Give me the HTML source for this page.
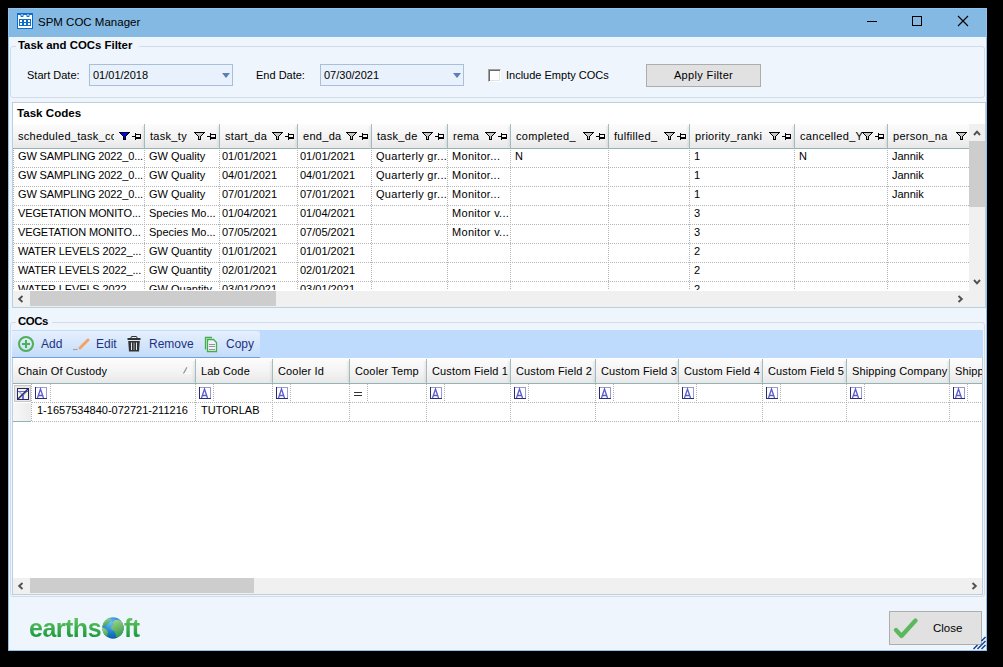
<!DOCTYPE html>
<html><head><meta charset="utf-8"><style>*{box-sizing:border-box;margin:0;padding:0}
html,body{width:1003px;height:667px;overflow:hidden;background:#000}
body{position:relative;font-family:"Liberation Sans",sans-serif;font-size:11px;color:#000}
.a{position:absolute}
.t{position:absolute;white-space:nowrap;line-height:13px}
.dv{position:absolute;width:1px;background-image:linear-gradient(#b4b4b4 50%,transparent 50%);background-size:1px 2px}
.dh{position:absolute;height:1px;background-image:linear-gradient(90deg,#b4b4b4 50%,transparent 50%);background-size:2px 1px;background-position:1px 0}
</style></head><body>
<div class="a" style="left:8px;top:8px;width:979px;height:643px;background:#eef5fd;border:1px solid #8fc1ec"></div>
<div class="a" style="left:8px;top:8px;width:979px;height:29px;background:#84b9e3;border:1px solid #8fc4f2;border-bottom:none"></div>
<svg class="a" style="left:17px;top:13px" width="16" height="16" viewBox="0 0 16 16">
<rect x="0" y="0" width="16" height="16" fill="#0b6ecb"/>
<rect x="1" y="2" width="14" height="13" fill="#fff"/>
<rect x="3.5" y="0" width="3" height="4" rx="0.8" fill="#0b6ecb"/><rect x="9.5" y="0" width="3" height="4" rx="0.8" fill="#0b6ecb"/>
<rect x="4.5" y="1" width="1" height="2" rx="0.5" fill="#fff"/><rect x="10.5" y="1" width="1" height="2" rx="0.5" fill="#fff"/>
<rect x="2" y="6" width="12" height="7" fill="#0b6ecb"/>
<rect x="3" y="7" width="2" height="2" fill="#fff"/><rect x="7" y="7" width="2" height="2" fill="#fff"/><rect x="11" y="7" width="2" height="2" fill="#fff"/>
<rect x="3" y="10" width="2" height="2" fill="#fff"/><rect x="7" y="10" width="2" height="2" fill="#fff"/><rect x="11" y="10" width="2" height="2" fill="#fff"/>
</svg>
<div class="t" style="left:38px;top:15px;font-size:11.5px;line-height:14px">SPM COC Manager</div>
<div class="a" style="left:867px;top:21px;width:10px;height:1px;background:#000"></div>
<div class="a" style="left:912px;top:16px;width:10px;height:10px;border:1px solid #000"></div>
<svg class="a" style="left:957px;top:15px" width="12" height="12" viewBox="0 0 12 12"><path d="M1 1L11 11M11 1L1 11" stroke="#000" stroke-width="1.1" fill="none"/></svg>
<div class="a" style="left:10px;top:46px;width:975px;height:52px;border:1px solid #d3dbe4;border-radius:3px"></div>
<div class="a" style="left:16px;top:40px;width:123px;height:13px;background:#eef5fd"></div>
<div class="t" style="left:18px;top:39px;font-weight:bold;font-size:11.4px">Task and COCs Filter</div>
<div class="t" style="left:27px;top:69px;">Start Date:</div>
<div class="a" style="left:89px;top:64px;width:144px;height:22px;background:#e9f1fc;border:1px solid #a8bfda"></div>
<div class="t" style="left:93px;top:69px;">01/01/2018</div>
<svg class="a" style="left:222px;top:73px" width="8" height="5" viewBox="0 0 8 5"><path d="M0 0H8L4 5Z" fill="#5a7fb5"/></svg>
<div class="t" style="left:256px;top:69px;">End Date:</div>
<div class="a" style="left:320px;top:64px;width:144px;height:22px;background:#e9f1fc;border:1px solid #a8bfda"></div>
<div class="t" style="left:324px;top:69px;">07/30/2021</div>
<svg class="a" style="left:453px;top:73px" width="8" height="5" viewBox="0 0 8 5"><path d="M0 0H8L4 5Z" fill="#5a7fb5"/></svg>
<div class="a" style="left:488px;top:69px;width:13px;height:13px;background:#fff;border:1px solid;border-color:#a0a0a0 #fff #fff #a0a0a0;box-shadow:inset 1px 1px 0 #696969,inset -1px -1px 0 #e3e3e3"></div>
<div class="t" style="left:506px;top:69px;">Include Empty COCs</div>
<div class="a" style="left:646px;top:64px;width:115px;height:23px;background:#e1e1e1;border:1px solid #adadad"></div>
<div class="t" style="left:646px;top:69px;width:115px;text-align:center;letter-spacing:0.35px">Apply Filter</div>
<div class="a" style="left:12px;top:102px;width:974px;height:206px;background:#fff;border:1px solid #bdcedd"></div>
<div class="t" style="left:17px;top:106px;font-weight:bold;font-size:11.6px">Task Codes</div>
<div class="a" style="left:13px;top:124px;width:956px;height:25px;background:linear-gradient(#fcfcfc,#f3f3f3 55%,#e8e8e8);border-bottom:1px solid #93b2b4"></div>
<div class="a" style="left:141px;top:126px;width:3px;height:21px;background:linear-gradient(90deg,rgba(0,0,0,0),rgba(0,0,0,0.07))"></div>
<div class="a" style="left:144px;top:124px;width:1px;height:24px;background:#a0bcbd"></div>
<div class="a" style="left:216px;top:126px;width:3px;height:21px;background:linear-gradient(90deg,rgba(0,0,0,0),rgba(0,0,0,0.07))"></div>
<div class="a" style="left:219px;top:124px;width:1px;height:24px;background:#a0bcbd"></div>
<div class="a" style="left:294px;top:126px;width:3px;height:21px;background:linear-gradient(90deg,rgba(0,0,0,0),rgba(0,0,0,0.07))"></div>
<div class="a" style="left:297px;top:124px;width:1px;height:24px;background:#a0bcbd"></div>
<div class="a" style="left:368px;top:126px;width:3px;height:21px;background:linear-gradient(90deg,rgba(0,0,0,0),rgba(0,0,0,0.07))"></div>
<div class="a" style="left:371px;top:124px;width:1px;height:24px;background:#a0bcbd"></div>
<div class="a" style="left:444px;top:126px;width:3px;height:21px;background:linear-gradient(90deg,rgba(0,0,0,0),rgba(0,0,0,0.07))"></div>
<div class="a" style="left:447px;top:124px;width:1px;height:24px;background:#a0bcbd"></div>
<div class="a" style="left:507px;top:126px;width:3px;height:21px;background:linear-gradient(90deg,rgba(0,0,0,0),rgba(0,0,0,0.07))"></div>
<div class="a" style="left:510px;top:124px;width:1px;height:24px;background:#a0bcbd"></div>
<div class="a" style="left:605px;top:126px;width:3px;height:21px;background:linear-gradient(90deg,rgba(0,0,0,0),rgba(0,0,0,0.07))"></div>
<div class="a" style="left:608px;top:124px;width:1px;height:24px;background:#a0bcbd"></div>
<div class="a" style="left:686px;top:126px;width:3px;height:21px;background:linear-gradient(90deg,rgba(0,0,0,0),rgba(0,0,0,0.07))"></div>
<div class="a" style="left:689px;top:124px;width:1px;height:24px;background:#a0bcbd"></div>
<div class="a" style="left:791px;top:126px;width:3px;height:21px;background:linear-gradient(90deg,rgba(0,0,0,0),rgba(0,0,0,0.07))"></div>
<div class="a" style="left:794px;top:124px;width:1px;height:24px;background:#a0bcbd"></div>
<div class="a" style="left:884px;top:126px;width:3px;height:21px;background:linear-gradient(90deg,rgba(0,0,0,0),rgba(0,0,0,0.07))"></div>
<div class="a" style="left:887px;top:124px;width:1px;height:24px;background:#a0bcbd"></div>
<div class="t" style="left:18px;top:130px;letter-spacing:0.3px;overflow:hidden;width:96px">scheduled_task_co</div>
<svg class="a" style="left:119px;top:132px" width="12" height="8" shape-rendering="crispEdges"><rect x="2" y="1" width="7" height="1" fill="#0000ff"/><rect x="3" y="2" width="5" height="1" fill="#0000ff"/><rect x="4" y="3" width="3" height="1" fill="#0000ff"/><rect x="5" y="4" width="1" height="3" fill="#0000ff"/><rect x="0" y="0" width="11" height="1" fill="#000"/><rect x="1" y="1" width="1" height="1" fill="#000"/><rect x="9" y="1" width="1" height="1" fill="#000"/><rect x="2" y="2" width="1" height="1" fill="#000"/><rect x="8" y="2" width="1" height="1" fill="#000"/><rect x="3" y="3" width="1" height="1" fill="#000"/><rect x="7" y="3" width="1" height="1" fill="#000"/><rect x="4" y="4" width="1" height="3" fill="#000"/><rect x="6" y="4" width="1" height="3" fill="#000"/><rect x="4" y="7" width="3" height="1" fill="#000"/></svg>
<svg class="a" style="left:132px;top:133px" width="9" height="7" shape-rendering="crispEdges"><rect x="0" y="3" width="3" height="1" fill="#000"/><rect x="3" y="0" width="1" height="7" fill="#000"/><rect x="4" y="1" width="5" height="1" fill="#000"/><rect x="8" y="1" width="1" height="5" fill="#000"/><rect x="4" y="4" width="5" height="2" fill="#000"/></svg>
<div class="t" style="left:150px;top:130px;letter-spacing:0.3px">task_ty</div>
<svg class="a" style="left:194px;top:132px" width="12" height="8" shape-rendering="crispEdges"><rect x="2" y="1" width="7" height="1" fill="#c8c8c8"/><rect x="3" y="2" width="5" height="1" fill="#c8c8c8"/><rect x="4" y="3" width="3" height="1" fill="#c8c8c8"/><rect x="5" y="4" width="1" height="3" fill="#c8c8c8"/><rect x="0" y="0" width="11" height="1" fill="#000"/><rect x="1" y="1" width="1" height="1" fill="#000"/><rect x="9" y="1" width="1" height="1" fill="#000"/><rect x="2" y="2" width="1" height="1" fill="#000"/><rect x="8" y="2" width="1" height="1" fill="#000"/><rect x="3" y="3" width="1" height="1" fill="#000"/><rect x="7" y="3" width="1" height="1" fill="#000"/><rect x="4" y="4" width="1" height="3" fill="#000"/><rect x="6" y="4" width="1" height="3" fill="#000"/><rect x="4" y="7" width="3" height="1" fill="#000"/></svg>
<svg class="a" style="left:207px;top:133px" width="9" height="7" shape-rendering="crispEdges"><rect x="0" y="3" width="3" height="1" fill="#000"/><rect x="3" y="0" width="1" height="7" fill="#000"/><rect x="4" y="1" width="5" height="1" fill="#000"/><rect x="8" y="1" width="1" height="5" fill="#000"/><rect x="4" y="4" width="5" height="2" fill="#000"/></svg>
<div class="t" style="left:225px;top:130px;letter-spacing:0.3px">start_da</div>
<svg class="a" style="left:272px;top:132px" width="12" height="8" shape-rendering="crispEdges"><rect x="2" y="1" width="7" height="1" fill="#c8c8c8"/><rect x="3" y="2" width="5" height="1" fill="#c8c8c8"/><rect x="4" y="3" width="3" height="1" fill="#c8c8c8"/><rect x="5" y="4" width="1" height="3" fill="#c8c8c8"/><rect x="0" y="0" width="11" height="1" fill="#000"/><rect x="1" y="1" width="1" height="1" fill="#000"/><rect x="9" y="1" width="1" height="1" fill="#000"/><rect x="2" y="2" width="1" height="1" fill="#000"/><rect x="8" y="2" width="1" height="1" fill="#000"/><rect x="3" y="3" width="1" height="1" fill="#000"/><rect x="7" y="3" width="1" height="1" fill="#000"/><rect x="4" y="4" width="1" height="3" fill="#000"/><rect x="6" y="4" width="1" height="3" fill="#000"/><rect x="4" y="7" width="3" height="1" fill="#000"/></svg>
<svg class="a" style="left:285px;top:133px" width="9" height="7" shape-rendering="crispEdges"><rect x="0" y="3" width="3" height="1" fill="#000"/><rect x="3" y="0" width="1" height="7" fill="#000"/><rect x="4" y="1" width="5" height="1" fill="#000"/><rect x="8" y="1" width="1" height="5" fill="#000"/><rect x="4" y="4" width="5" height="2" fill="#000"/></svg>
<div class="t" style="left:303px;top:130px;letter-spacing:0.3px">end_da</div>
<svg class="a" style="left:346px;top:132px" width="12" height="8" shape-rendering="crispEdges"><rect x="2" y="1" width="7" height="1" fill="#c8c8c8"/><rect x="3" y="2" width="5" height="1" fill="#c8c8c8"/><rect x="4" y="3" width="3" height="1" fill="#c8c8c8"/><rect x="5" y="4" width="1" height="3" fill="#c8c8c8"/><rect x="0" y="0" width="11" height="1" fill="#000"/><rect x="1" y="1" width="1" height="1" fill="#000"/><rect x="9" y="1" width="1" height="1" fill="#000"/><rect x="2" y="2" width="1" height="1" fill="#000"/><rect x="8" y="2" width="1" height="1" fill="#000"/><rect x="3" y="3" width="1" height="1" fill="#000"/><rect x="7" y="3" width="1" height="1" fill="#000"/><rect x="4" y="4" width="1" height="3" fill="#000"/><rect x="6" y="4" width="1" height="3" fill="#000"/><rect x="4" y="7" width="3" height="1" fill="#000"/></svg>
<svg class="a" style="left:359px;top:133px" width="9" height="7" shape-rendering="crispEdges"><rect x="0" y="3" width="3" height="1" fill="#000"/><rect x="3" y="0" width="1" height="7" fill="#000"/><rect x="4" y="1" width="5" height="1" fill="#000"/><rect x="8" y="1" width="1" height="5" fill="#000"/><rect x="4" y="4" width="5" height="2" fill="#000"/></svg>
<div class="t" style="left:377px;top:130px;letter-spacing:0.3px">task_de</div>
<svg class="a" style="left:422px;top:132px" width="12" height="8" shape-rendering="crispEdges"><rect x="2" y="1" width="7" height="1" fill="#c8c8c8"/><rect x="3" y="2" width="5" height="1" fill="#c8c8c8"/><rect x="4" y="3" width="3" height="1" fill="#c8c8c8"/><rect x="5" y="4" width="1" height="3" fill="#c8c8c8"/><rect x="0" y="0" width="11" height="1" fill="#000"/><rect x="1" y="1" width="1" height="1" fill="#000"/><rect x="9" y="1" width="1" height="1" fill="#000"/><rect x="2" y="2" width="1" height="1" fill="#000"/><rect x="8" y="2" width="1" height="1" fill="#000"/><rect x="3" y="3" width="1" height="1" fill="#000"/><rect x="7" y="3" width="1" height="1" fill="#000"/><rect x="4" y="4" width="1" height="3" fill="#000"/><rect x="6" y="4" width="1" height="3" fill="#000"/><rect x="4" y="7" width="3" height="1" fill="#000"/></svg>
<svg class="a" style="left:435px;top:133px" width="9" height="7" shape-rendering="crispEdges"><rect x="0" y="3" width="3" height="1" fill="#000"/><rect x="3" y="0" width="1" height="7" fill="#000"/><rect x="4" y="1" width="5" height="1" fill="#000"/><rect x="8" y="1" width="1" height="5" fill="#000"/><rect x="4" y="4" width="5" height="2" fill="#000"/></svg>
<div class="t" style="left:453px;top:130px;letter-spacing:0.3px">rema</div>
<svg class="a" style="left:485px;top:132px" width="12" height="8" shape-rendering="crispEdges"><rect x="2" y="1" width="7" height="1" fill="#c8c8c8"/><rect x="3" y="2" width="5" height="1" fill="#c8c8c8"/><rect x="4" y="3" width="3" height="1" fill="#c8c8c8"/><rect x="5" y="4" width="1" height="3" fill="#c8c8c8"/><rect x="0" y="0" width="11" height="1" fill="#000"/><rect x="1" y="1" width="1" height="1" fill="#000"/><rect x="9" y="1" width="1" height="1" fill="#000"/><rect x="2" y="2" width="1" height="1" fill="#000"/><rect x="8" y="2" width="1" height="1" fill="#000"/><rect x="3" y="3" width="1" height="1" fill="#000"/><rect x="7" y="3" width="1" height="1" fill="#000"/><rect x="4" y="4" width="1" height="3" fill="#000"/><rect x="6" y="4" width="1" height="3" fill="#000"/><rect x="4" y="7" width="3" height="1" fill="#000"/></svg>
<svg class="a" style="left:498px;top:133px" width="9" height="7" shape-rendering="crispEdges"><rect x="0" y="3" width="3" height="1" fill="#000"/><rect x="3" y="0" width="1" height="7" fill="#000"/><rect x="4" y="1" width="5" height="1" fill="#000"/><rect x="8" y="1" width="1" height="5" fill="#000"/><rect x="4" y="4" width="5" height="2" fill="#000"/></svg>
<div class="t" style="left:516px;top:130px;letter-spacing:0.3px">completed_</div>
<svg class="a" style="left:583px;top:132px" width="12" height="8" shape-rendering="crispEdges"><rect x="2" y="1" width="7" height="1" fill="#c8c8c8"/><rect x="3" y="2" width="5" height="1" fill="#c8c8c8"/><rect x="4" y="3" width="3" height="1" fill="#c8c8c8"/><rect x="5" y="4" width="1" height="3" fill="#c8c8c8"/><rect x="0" y="0" width="11" height="1" fill="#000"/><rect x="1" y="1" width="1" height="1" fill="#000"/><rect x="9" y="1" width="1" height="1" fill="#000"/><rect x="2" y="2" width="1" height="1" fill="#000"/><rect x="8" y="2" width="1" height="1" fill="#000"/><rect x="3" y="3" width="1" height="1" fill="#000"/><rect x="7" y="3" width="1" height="1" fill="#000"/><rect x="4" y="4" width="1" height="3" fill="#000"/><rect x="6" y="4" width="1" height="3" fill="#000"/><rect x="4" y="7" width="3" height="1" fill="#000"/></svg>
<svg class="a" style="left:596px;top:133px" width="9" height="7" shape-rendering="crispEdges"><rect x="0" y="3" width="3" height="1" fill="#000"/><rect x="3" y="0" width="1" height="7" fill="#000"/><rect x="4" y="1" width="5" height="1" fill="#000"/><rect x="8" y="1" width="1" height="5" fill="#000"/><rect x="4" y="4" width="5" height="2" fill="#000"/></svg>
<div class="t" style="left:614px;top:130px;letter-spacing:0.3px">fulfilled_</div>
<svg class="a" style="left:664px;top:132px" width="12" height="8" shape-rendering="crispEdges"><rect x="2" y="1" width="7" height="1" fill="#c8c8c8"/><rect x="3" y="2" width="5" height="1" fill="#c8c8c8"/><rect x="4" y="3" width="3" height="1" fill="#c8c8c8"/><rect x="5" y="4" width="1" height="3" fill="#c8c8c8"/><rect x="0" y="0" width="11" height="1" fill="#000"/><rect x="1" y="1" width="1" height="1" fill="#000"/><rect x="9" y="1" width="1" height="1" fill="#000"/><rect x="2" y="2" width="1" height="1" fill="#000"/><rect x="8" y="2" width="1" height="1" fill="#000"/><rect x="3" y="3" width="1" height="1" fill="#000"/><rect x="7" y="3" width="1" height="1" fill="#000"/><rect x="4" y="4" width="1" height="3" fill="#000"/><rect x="6" y="4" width="1" height="3" fill="#000"/><rect x="4" y="7" width="3" height="1" fill="#000"/></svg>
<svg class="a" style="left:677px;top:133px" width="9" height="7" shape-rendering="crispEdges"><rect x="0" y="3" width="3" height="1" fill="#000"/><rect x="3" y="0" width="1" height="7" fill="#000"/><rect x="4" y="1" width="5" height="1" fill="#000"/><rect x="8" y="1" width="1" height="5" fill="#000"/><rect x="4" y="4" width="5" height="2" fill="#000"/></svg>
<div class="t" style="left:695px;top:130px;letter-spacing:0.3px">priority_ranki</div>
<svg class="a" style="left:769px;top:132px" width="12" height="8" shape-rendering="crispEdges"><rect x="2" y="1" width="7" height="1" fill="#c8c8c8"/><rect x="3" y="2" width="5" height="1" fill="#c8c8c8"/><rect x="4" y="3" width="3" height="1" fill="#c8c8c8"/><rect x="5" y="4" width="1" height="3" fill="#c8c8c8"/><rect x="0" y="0" width="11" height="1" fill="#000"/><rect x="1" y="1" width="1" height="1" fill="#000"/><rect x="9" y="1" width="1" height="1" fill="#000"/><rect x="2" y="2" width="1" height="1" fill="#000"/><rect x="8" y="2" width="1" height="1" fill="#000"/><rect x="3" y="3" width="1" height="1" fill="#000"/><rect x="7" y="3" width="1" height="1" fill="#000"/><rect x="4" y="4" width="1" height="3" fill="#000"/><rect x="6" y="4" width="1" height="3" fill="#000"/><rect x="4" y="7" width="3" height="1" fill="#000"/></svg>
<svg class="a" style="left:782px;top:133px" width="9" height="7" shape-rendering="crispEdges"><rect x="0" y="3" width="3" height="1" fill="#000"/><rect x="3" y="0" width="1" height="7" fill="#000"/><rect x="4" y="1" width="5" height="1" fill="#000"/><rect x="8" y="1" width="1" height="5" fill="#000"/><rect x="4" y="4" width="5" height="2" fill="#000"/></svg>
<div class="t" style="left:800px;top:130px;letter-spacing:0.3px">cancelled_Y</div>
<svg class="a" style="left:862px;top:132px" width="12" height="8" shape-rendering="crispEdges"><rect x="2" y="1" width="7" height="1" fill="#c8c8c8"/><rect x="3" y="2" width="5" height="1" fill="#c8c8c8"/><rect x="4" y="3" width="3" height="1" fill="#c8c8c8"/><rect x="5" y="4" width="1" height="3" fill="#c8c8c8"/><rect x="0" y="0" width="11" height="1" fill="#000"/><rect x="1" y="1" width="1" height="1" fill="#000"/><rect x="9" y="1" width="1" height="1" fill="#000"/><rect x="2" y="2" width="1" height="1" fill="#000"/><rect x="8" y="2" width="1" height="1" fill="#000"/><rect x="3" y="3" width="1" height="1" fill="#000"/><rect x="7" y="3" width="1" height="1" fill="#000"/><rect x="4" y="4" width="1" height="3" fill="#000"/><rect x="6" y="4" width="1" height="3" fill="#000"/><rect x="4" y="7" width="3" height="1" fill="#000"/></svg>
<svg class="a" style="left:875px;top:133px" width="9" height="7" shape-rendering="crispEdges"><rect x="0" y="3" width="3" height="1" fill="#000"/><rect x="3" y="0" width="1" height="7" fill="#000"/><rect x="4" y="1" width="5" height="1" fill="#000"/><rect x="8" y="1" width="1" height="5" fill="#000"/><rect x="4" y="4" width="5" height="2" fill="#000"/></svg>
<div class="t" style="left:893px;top:130px;letter-spacing:0.3px">person_na</div>
<svg class="a" style="left:956px;top:132px" width="12" height="8" shape-rendering="crispEdges"><rect x="2" y="1" width="7" height="1" fill="#c8c8c8"/><rect x="3" y="2" width="5" height="1" fill="#c8c8c8"/><rect x="4" y="3" width="3" height="1" fill="#c8c8c8"/><rect x="5" y="4" width="1" height="3" fill="#c8c8c8"/><rect x="0" y="0" width="11" height="1" fill="#000"/><rect x="1" y="1" width="1" height="1" fill="#000"/><rect x="9" y="1" width="1" height="1" fill="#000"/><rect x="2" y="2" width="1" height="1" fill="#000"/><rect x="8" y="2" width="1" height="1" fill="#000"/><rect x="3" y="3" width="1" height="1" fill="#000"/><rect x="7" y="3" width="1" height="1" fill="#000"/><rect x="4" y="4" width="1" height="3" fill="#000"/><rect x="6" y="4" width="1" height="3" fill="#000"/><rect x="4" y="7" width="3" height="1" fill="#000"/></svg>
<div class="a" style="left:13px;top:149px;width:956px;height:141px;overflow:hidden">
<div class="t" style="left:5px;top:1px;letter-spacing:-0.13px">GW SAMPLING 2022_0...</div>
<div class="t" style="left:136px;top:1px">GW Quality</div>
<div class="t" style="left:209px;top:1px">01/01/2021</div>
<div class="t" style="left:287px;top:1px">01/01/2021</div>
<div class="t" style="left:363px;top:1px;letter-spacing:0.3px">Quarterly gr...</div>
<div class="t" style="left:439px;top:1px;letter-spacing:0.3px">Monitor...</div>
<div class="t" style="left:502px;top:1px">N</div>
<div class="t" style="left:681px;top:1px">1</div>
<div class="t" style="left:786px;top:1px">N</div>
<div class="t" style="left:879px;top:1px">Jannik</div>
<div class="dh" style="left:0;top:18px;width:956px"></div>
<div class="t" style="left:5px;top:20px;letter-spacing:-0.13px">GW SAMPLING 2022_0...</div>
<div class="t" style="left:136px;top:20px">GW Quality</div>
<div class="t" style="left:209px;top:20px">04/01/2021</div>
<div class="t" style="left:287px;top:20px">04/01/2021</div>
<div class="t" style="left:363px;top:20px;letter-spacing:0.3px">Quarterly gr...</div>
<div class="t" style="left:439px;top:20px;letter-spacing:0.3px">Monitor...</div>
<div class="t" style="left:681px;top:20px">1</div>
<div class="t" style="left:879px;top:20px">Jannik</div>
<div class="dh" style="left:0;top:37px;width:956px"></div>
<div class="t" style="left:5px;top:39px;letter-spacing:-0.13px">GW SAMPLING 2022_0...</div>
<div class="t" style="left:136px;top:39px">GW Quality</div>
<div class="t" style="left:209px;top:39px">07/01/2021</div>
<div class="t" style="left:287px;top:39px">07/01/2021</div>
<div class="t" style="left:363px;top:39px;letter-spacing:0.3px">Quarterly gr...</div>
<div class="t" style="left:439px;top:39px;letter-spacing:0.3px">Monitor...</div>
<div class="t" style="left:681px;top:39px">1</div>
<div class="t" style="left:879px;top:39px">Jannik</div>
<div class="dh" style="left:0;top:56px;width:956px"></div>
<div class="t" style="left:5px;top:58px;letter-spacing:-0.13px">VEGETATION MONITO...</div>
<div class="t" style="left:136px;top:58px">Species Mo...</div>
<div class="t" style="left:209px;top:58px">01/04/2021</div>
<div class="t" style="left:287px;top:58px">01/04/2021</div>
<div class="t" style="left:439px;top:58px;letter-spacing:0.3px">Monitor v...</div>
<div class="t" style="left:681px;top:58px">3</div>
<div class="dh" style="left:0;top:75px;width:956px"></div>
<div class="t" style="left:5px;top:77px;letter-spacing:-0.13px">VEGETATION MONITO...</div>
<div class="t" style="left:136px;top:77px">Species Mo...</div>
<div class="t" style="left:209px;top:77px">07/05/2021</div>
<div class="t" style="left:287px;top:77px">07/05/2021</div>
<div class="t" style="left:439px;top:77px;letter-spacing:0.3px">Monitor v...</div>
<div class="t" style="left:681px;top:77px">3</div>
<div class="dh" style="left:0;top:94px;width:956px"></div>
<div class="t" style="left:5px;top:96px;letter-spacing:-0.13px">WATER LEVELS 2022_...</div>
<div class="t" style="left:136px;top:96px">GW Quantity</div>
<div class="t" style="left:209px;top:96px">01/01/2021</div>
<div class="t" style="left:287px;top:96px">01/01/2021</div>
<div class="t" style="left:681px;top:96px">2</div>
<div class="dh" style="left:0;top:113px;width:956px"></div>
<div class="t" style="left:5px;top:115px;letter-spacing:-0.13px">WATER LEVELS 2022_...</div>
<div class="t" style="left:136px;top:115px">GW Quantity</div>
<div class="t" style="left:209px;top:115px">02/01/2021</div>
<div class="t" style="left:287px;top:115px">02/01/2021</div>
<div class="t" style="left:681px;top:115px">2</div>
<div class="dh" style="left:0;top:132px;width:956px"></div>
<div class="t" style="left:5px;top:134px;letter-spacing:-0.13px">WATER LEVELS 2022_...</div>
<div class="t" style="left:136px;top:134px">GW Quantity</div>
<div class="t" style="left:209px;top:134px">03/01/2021</div>
<div class="t" style="left:287px;top:134px">03/01/2021</div>
<div class="t" style="left:681px;top:134px">2</div>
<div class="dh" style="left:0;top:151px;width:956px"></div>
<div class="dv" style="left:0px;top:0;height:142px;background-position:0 1px"></div>
<div class="dv" style="left:131px;top:0;height:142px;background-position:0 1px"></div>
<div class="dv" style="left:206px;top:0;height:142px;background-position:0 1px"></div>
<div class="dv" style="left:284px;top:0;height:142px;background-position:0 1px"></div>
<div class="dv" style="left:358px;top:0;height:142px;background-position:0 1px"></div>
<div class="dv" style="left:434px;top:0;height:142px;background-position:0 1px"></div>
<div class="dv" style="left:497px;top:0;height:142px;background-position:0 1px"></div>
<div class="dv" style="left:595px;top:0;height:142px;background-position:0 1px"></div>
<div class="dv" style="left:676px;top:0;height:142px;background-position:0 1px"></div>
<div class="dv" style="left:781px;top:0;height:142px;background-position:0 1px"></div>
<div class="dv" style="left:874px;top:0;height:142px;background-position:0 1px"></div>
</div>
<div class="a" style="left:969px;top:124px;width:16px;height:167px;background:#f0f0f0"></div>
<div class="a" style="left:969px;top:141px;width:16px;height:66px;background:#cdcdcd"></div>
<svg class="a" style="left:972.5px;top:129px" width="8" height="8" viewBox="0 0 8 8"><path d="M1 6L4 2.6L7 6" stroke="#505050" stroke-width="1.9" fill="none"/></svg>
<svg class="a" style="left:972.5px;top:277.5px" width="8" height="8" viewBox="0 0 8 8"><path d="M1 2L4 5.4L7 2" stroke="#505050" stroke-width="1.9" fill="none"/></svg>
<div class="a" style="left:13px;top:291px;width:972px;height:16px;background:#f0f0f0"></div>
<div class="a" style="left:30px;top:291px;width:246px;height:15px;background:#cdcdcd"></div>
<svg class="a" style="left:17px;top:295px" width="8" height="8" viewBox="0 0 8 8"><path d="M5.5 1L2.2 4L5.5 7" stroke="#505050" stroke-width="1.9" fill="none"/></svg>
<svg class="a" style="left:955.5px;top:294.5px" width="8" height="8" viewBox="0 0 8 8"><path d="M2.5 1L5.8 4L2.5 7" stroke="#505050" stroke-width="1.9" fill="none"/></svg>
<div class="a" style="left:10px;top:322px;width:975px;height:275px;border:1px solid #d3dbe4;border-radius:3px"></div>
<div class="a" style="left:16px;top:316px;width:36px;height:13px;background:#eef5fd"></div>
<div class="t" style="left:18px;top:315px;font-weight:bold;font-size:11.4px;letter-spacing:-0.4px">COCs</div>
<div class="a" style="left:12px;top:330px;width:971px;height:29px;background:#bedbfe"></div>
<div class="a" style="left:12px;top:331px;width:248px;height:27px;background:linear-gradient(#e6f0fd,#c3dcfa);border-bottom:1px solid #6fa0dc;border-top-right-radius:3px"></div>
<svg class="a" style="left:18px;top:336px" width="16" height="16" viewBox="0 0 16 16"><circle cx="8" cy="8" r="7" fill="none" stroke="#4db052" stroke-width="2"/><path d="M8 4V12M4 8H12" stroke="#4db052" stroke-width="2"/></svg>
<div class="t" style="left:41px;top:338px;color:#1f3282;font-size:12px">Add</div>
<svg class="a" style="left:72px;top:337px" width="18" height="14" viewBox="0 0 18 14"><path d="M8 11L16 3" stroke="#f4a460" stroke-width="3" stroke-linecap="round"/><path d="M1 12.5H5.5" stroke="#a0a0a0" stroke-width="1.2"/></svg>
<div class="t" style="left:96px;top:338px;color:#1f3282;font-size:12px">Edit</div>
<svg class="a" style="left:127px;top:336px" width="14" height="16" viewBox="0 0 14 16"><rect x="4" y="0.5" width="6" height="2" rx="1" fill="none" stroke="#333" stroke-width="1"/><rect x="0.5" y="2" width="13" height="2" fill="#333"/><path d="M1.2 5H12.8L12 15.5H2Z" fill="#333"/><rect x="4" y="6.5" width="1" height="7.5" fill="#e0e8f0"/><rect x="6.5" y="6.5" width="1" height="7.5" fill="#9aa6b4"/><rect x="9" y="6.5" width="1" height="7.5" fill="#e0e8f0"/></svg>
<div class="t" style="left:149px;top:338px;color:#1f3282;font-size:12px">Remove</div>
<svg class="a" style="left:204px;top:336px" width="14" height="17" viewBox="0 0 14 17"><path d="M1.5 13.5V1.5H8" fill="none" stroke="#43b047" stroke-width="1.3"/><path d="M3.5 15.5V3.5H9.5L12.5 6.5V15.5Z" fill="#eef4fb" stroke="#43b047" stroke-width="1.3"/><path d="M5 8.5H11M5 10.5H11M5 13.5H11" stroke="#888" stroke-width="0.9"/></svg>
<div class="t" style="left:226px;top:338px;color:#1f3282;font-size:12px">Copy</div>
<div class="a" style="left:12px;top:358px;width:971px;height:237px;background:#fff;border:1px solid #bdcedd;border-top:none"></div>
<div class="a" style="left:13px;top:359px;width:969px;height:25px;overflow:hidden">
<div class="a" style="left:0;top:0;width:969px;height:25px;background:linear-gradient(#fcfcfc,#f3f3f3 55%,#e8e8e8);border-bottom:1px solid #93b2b4"></div>
<div class="a" style="left:179px;top:2px;width:3px;height:21px;background:linear-gradient(90deg,rgba(0,0,0,0),rgba(0,0,0,0.07))"></div>
<div class="a" style="left:182px;top:0;width:1px;height:24px;background:#a0bcbd"></div>
<div class="a" style="left:256px;top:2px;width:3px;height:21px;background:linear-gradient(90deg,rgba(0,0,0,0),rgba(0,0,0,0.07))"></div>
<div class="a" style="left:259px;top:0;width:1px;height:24px;background:#a0bcbd"></div>
<div class="a" style="left:333px;top:2px;width:3px;height:21px;background:linear-gradient(90deg,rgba(0,0,0,0),rgba(0,0,0,0.07))"></div>
<div class="a" style="left:336px;top:0;width:1px;height:24px;background:#a0bcbd"></div>
<div class="a" style="left:410px;top:2px;width:3px;height:21px;background:linear-gradient(90deg,rgba(0,0,0,0),rgba(0,0,0,0.07))"></div>
<div class="a" style="left:413px;top:0;width:1px;height:24px;background:#a0bcbd"></div>
<div class="a" style="left:494px;top:2px;width:3px;height:21px;background:linear-gradient(90deg,rgba(0,0,0,0),rgba(0,0,0,0.07))"></div>
<div class="a" style="left:497px;top:0;width:1px;height:24px;background:#a0bcbd"></div>
<div class="a" style="left:579px;top:2px;width:3px;height:21px;background:linear-gradient(90deg,rgba(0,0,0,0),rgba(0,0,0,0.07))"></div>
<div class="a" style="left:582px;top:0;width:1px;height:24px;background:#a0bcbd"></div>
<div class="a" style="left:662px;top:2px;width:3px;height:21px;background:linear-gradient(90deg,rgba(0,0,0,0),rgba(0,0,0,0.07))"></div>
<div class="a" style="left:665px;top:0;width:1px;height:24px;background:#a0bcbd"></div>
<div class="a" style="left:746px;top:2px;width:3px;height:21px;background:linear-gradient(90deg,rgba(0,0,0,0),rgba(0,0,0,0.07))"></div>
<div class="a" style="left:749px;top:0;width:1px;height:24px;background:#a0bcbd"></div>
<div class="a" style="left:830px;top:2px;width:3px;height:21px;background:linear-gradient(90deg,rgba(0,0,0,0),rgba(0,0,0,0.07))"></div>
<div class="a" style="left:833px;top:0;width:1px;height:24px;background:#a0bcbd"></div>
<div class="a" style="left:933px;top:2px;width:3px;height:21px;background:linear-gradient(90deg,rgba(0,0,0,0),rgba(0,0,0,0.07))"></div>
<div class="a" style="left:936px;top:0;width:1px;height:24px;background:#a0bcbd"></div>
<div class="t" style="left:5px;top:6px;letter-spacing:0.15px">Chain Of Custody</div>
<div class="t" style="left:188px;top:6px;letter-spacing:0.15px">Lab Code</div>
<div class="t" style="left:265px;top:6px;letter-spacing:0.15px">Cooler Id</div>
<div class="t" style="left:342px;top:6px;letter-spacing:0.15px">Cooler Temp</div>
<div class="t" style="left:419px;top:6px;letter-spacing:0.15px">Custom Field 1</div>
<div class="t" style="left:503px;top:6px;letter-spacing:0.15px">Custom Field 2</div>
<div class="t" style="left:588px;top:6px;letter-spacing:0.15px">Custom Field 3</div>
<div class="t" style="left:671px;top:6px;letter-spacing:0.15px">Custom Field 4</div>
<div class="t" style="left:755px;top:6px;letter-spacing:0.15px">Custom Field 5</div>
<div class="t" style="left:839px;top:6px;letter-spacing:0.15px">Shipping Company</div>
<div class="t" style="left:942px;top:6px;letter-spacing:0.15px">Shipping</div>
</div>
<svg class="a" style="left:182px;top:366px" width="10" height="9" viewBox="0 0 10 9"><path d="M5 1L8.5 7.5H1.5" stroke="#fff" stroke-width="1" fill="none"/><path d="M1.5 7.5L5 1.2" stroke="#8a8a8a" stroke-width="1.1" fill="none"/></svg>
<div class="a" style="left:13px;top:384px;width:969px;height:194px;overflow:hidden">
<div class="a" style="left:1px;top:1px;width:17px;height:17px;background:#e8e8e8;border:1px solid #c8c8c8"></div>
<svg class="a" style="left:4px;top:4px" width="12" height="12" viewBox="0 0 12 12"><rect x="0" y="0" width="12" height="12" fill="#26266b" shape-rendering="crispEdges"/><rect x="1" y="1" width="10" height="10" fill="#f6f4e2" shape-rendering="crispEdges"/><rect x="1" y="3" width="10" height="1" fill="#6a6ae0" shape-rendering="crispEdges"/><path d="M2.5 4L5.5 7V11M9.5 4L6.5 7V11" stroke="#6a6ae0" stroke-width="1" fill="none"/><path d="M1 11L11 1" stroke="#26266b" stroke-width="1.5"/></svg>
<div class="a" style="left:0;top:19px;width:18px;height:19px;background:linear-gradient(90deg,#f7f7f7,#ececec);border-bottom:1px solid #93b2b4"></div>
<div class="dv" style="left:18px;top:0;height:38px"></div>
<svg class="a" style="left:22px;top:3px" width="12" height="12" viewBox="0 0 12 12"><g shape-rendering="crispEdges"><rect x="0" y="0" width="12" height="12" fill="#fff"/><rect x="0" y="0" width="12" height="1" fill="#9a9ad6"/><rect x="11" y="0" width="1" height="12" fill="#9a9ad6"/><rect x="0" y="0" width="1" height="12" fill="#2b2b70"/><rect x="0" y="11" width="12" height="1" fill="#2b2b70"/></g><path d="M2.5 11L5.5 2L8.5 11M3.5 8.5H7.5" stroke="#5b5bd0" stroke-width="1.3" fill="none"/></svg>
<div class="dv" style="left:37px;top:0;height:18px"></div>
<svg class="a" style="left:186px;top:3px" width="12" height="12" viewBox="0 0 12 12"><g shape-rendering="crispEdges"><rect x="0" y="0" width="12" height="12" fill="#fff"/><rect x="0" y="0" width="12" height="1" fill="#9a9ad6"/><rect x="11" y="0" width="1" height="12" fill="#9a9ad6"/><rect x="0" y="0" width="1" height="12" fill="#2b2b70"/><rect x="0" y="11" width="12" height="1" fill="#2b2b70"/></g><path d="M2.5 11L5.5 2L8.5 11M3.5 8.5H7.5" stroke="#5b5bd0" stroke-width="1.3" fill="none"/></svg>
<div class="dv" style="left:200px;top:0;height:18px"></div>
<svg class="a" style="left:263px;top:3px" width="12" height="12" viewBox="0 0 12 12"><g shape-rendering="crispEdges"><rect x="0" y="0" width="12" height="12" fill="#fff"/><rect x="0" y="0" width="12" height="1" fill="#9a9ad6"/><rect x="11" y="0" width="1" height="12" fill="#9a9ad6"/><rect x="0" y="0" width="1" height="12" fill="#2b2b70"/><rect x="0" y="11" width="12" height="1" fill="#2b2b70"/></g><path d="M2.5 11L5.5 2L8.5 11M3.5 8.5H7.5" stroke="#5b5bd0" stroke-width="1.3" fill="none"/></svg>
<div class="dv" style="left:277px;top:0;height:18px"></div>
<div class="a" style="left:341px;top:8px;width:8px;height:1px;background:#333"></div>
<div class="a" style="left:341px;top:11px;width:8px;height:1px;background:#333"></div>
<div class="dv" style="left:354px;top:0;height:18px"></div>
<svg class="a" style="left:417px;top:3px" width="12" height="12" viewBox="0 0 12 12"><g shape-rendering="crispEdges"><rect x="0" y="0" width="12" height="12" fill="#fff"/><rect x="0" y="0" width="12" height="1" fill="#9a9ad6"/><rect x="11" y="0" width="1" height="12" fill="#9a9ad6"/><rect x="0" y="0" width="1" height="12" fill="#2b2b70"/><rect x="0" y="11" width="12" height="1" fill="#2b2b70"/></g><path d="M2.5 11L5.5 2L8.5 11M3.5 8.5H7.5" stroke="#5b5bd0" stroke-width="1.3" fill="none"/></svg>
<div class="dv" style="left:431px;top:0;height:18px"></div>
<svg class="a" style="left:501px;top:3px" width="12" height="12" viewBox="0 0 12 12"><g shape-rendering="crispEdges"><rect x="0" y="0" width="12" height="12" fill="#fff"/><rect x="0" y="0" width="12" height="1" fill="#9a9ad6"/><rect x="11" y="0" width="1" height="12" fill="#9a9ad6"/><rect x="0" y="0" width="1" height="12" fill="#2b2b70"/><rect x="0" y="11" width="12" height="1" fill="#2b2b70"/></g><path d="M2.5 11L5.5 2L8.5 11M3.5 8.5H7.5" stroke="#5b5bd0" stroke-width="1.3" fill="none"/></svg>
<div class="dv" style="left:515px;top:0;height:18px"></div>
<svg class="a" style="left:586px;top:3px" width="12" height="12" viewBox="0 0 12 12"><g shape-rendering="crispEdges"><rect x="0" y="0" width="12" height="12" fill="#fff"/><rect x="0" y="0" width="12" height="1" fill="#9a9ad6"/><rect x="11" y="0" width="1" height="12" fill="#9a9ad6"/><rect x="0" y="0" width="1" height="12" fill="#2b2b70"/><rect x="0" y="11" width="12" height="1" fill="#2b2b70"/></g><path d="M2.5 11L5.5 2L8.5 11M3.5 8.5H7.5" stroke="#5b5bd0" stroke-width="1.3" fill="none"/></svg>
<div class="dv" style="left:600px;top:0;height:18px"></div>
<svg class="a" style="left:669px;top:3px" width="12" height="12" viewBox="0 0 12 12"><g shape-rendering="crispEdges"><rect x="0" y="0" width="12" height="12" fill="#fff"/><rect x="0" y="0" width="12" height="1" fill="#9a9ad6"/><rect x="11" y="0" width="1" height="12" fill="#9a9ad6"/><rect x="0" y="0" width="1" height="12" fill="#2b2b70"/><rect x="0" y="11" width="12" height="1" fill="#2b2b70"/></g><path d="M2.5 11L5.5 2L8.5 11M3.5 8.5H7.5" stroke="#5b5bd0" stroke-width="1.3" fill="none"/></svg>
<div class="dv" style="left:683px;top:0;height:18px"></div>
<svg class="a" style="left:753px;top:3px" width="12" height="12" viewBox="0 0 12 12"><g shape-rendering="crispEdges"><rect x="0" y="0" width="12" height="12" fill="#fff"/><rect x="0" y="0" width="12" height="1" fill="#9a9ad6"/><rect x="11" y="0" width="1" height="12" fill="#9a9ad6"/><rect x="0" y="0" width="1" height="12" fill="#2b2b70"/><rect x="0" y="11" width="12" height="1" fill="#2b2b70"/></g><path d="M2.5 11L5.5 2L8.5 11M3.5 8.5H7.5" stroke="#5b5bd0" stroke-width="1.3" fill="none"/></svg>
<div class="dv" style="left:767px;top:0;height:18px"></div>
<svg class="a" style="left:837px;top:3px" width="12" height="12" viewBox="0 0 12 12"><g shape-rendering="crispEdges"><rect x="0" y="0" width="12" height="12" fill="#fff"/><rect x="0" y="0" width="12" height="1" fill="#9a9ad6"/><rect x="11" y="0" width="1" height="12" fill="#9a9ad6"/><rect x="0" y="0" width="1" height="12" fill="#2b2b70"/><rect x="0" y="11" width="12" height="1" fill="#2b2b70"/></g><path d="M2.5 11L5.5 2L8.5 11M3.5 8.5H7.5" stroke="#5b5bd0" stroke-width="1.3" fill="none"/></svg>
<div class="dv" style="left:851px;top:0;height:18px"></div>
<svg class="a" style="left:940px;top:3px" width="12" height="12" viewBox="0 0 12 12"><g shape-rendering="crispEdges"><rect x="0" y="0" width="12" height="12" fill="#fff"/><rect x="0" y="0" width="12" height="1" fill="#9a9ad6"/><rect x="11" y="0" width="1" height="12" fill="#9a9ad6"/><rect x="0" y="0" width="1" height="12" fill="#2b2b70"/><rect x="0" y="11" width="12" height="1" fill="#2b2b70"/></g><path d="M2.5 11L5.5 2L8.5 11M3.5 8.5H7.5" stroke="#5b5bd0" stroke-width="1.3" fill="none"/></svg>
<div class="dv" style="left:954px;top:0;height:18px"></div>
<div class="dh" style="left:18px;top:18px;width:951px"></div>
<div class="dh" style="left:18px;top:37px;width:951px"></div>
<div class="dv" style="left:182px;top:0;height:38px"></div>
<div class="dv" style="left:259px;top:0;height:38px"></div>
<div class="dv" style="left:336px;top:0;height:38px"></div>
<div class="dv" style="left:413px;top:0;height:38px"></div>
<div class="dv" style="left:497px;top:0;height:38px"></div>
<div class="dv" style="left:582px;top:0;height:38px"></div>
<div class="dv" style="left:665px;top:0;height:38px"></div>
<div class="dv" style="left:749px;top:0;height:38px"></div>
<div class="dv" style="left:833px;top:0;height:38px"></div>
<div class="dv" style="left:936px;top:0;height:38px"></div>
<div class="t" style="left:24px;top:20px">1-1657534840-072721-211216</div>
<div class="t" style="left:188px;top:20px">TUTORLAB</div>
</div>
<div class="a" style="left:13px;top:578px;width:969px;height:16px;background:#f0f0f0"></div>
<div class="a" style="left:30px;top:578px;width:224px;height:15px;background:#cdcdcd"></div>
<svg class="a" style="left:17px;top:582px" width="8" height="8" viewBox="0 0 8 8"><path d="M5.5 1L2.2 4L5.5 7" stroke="#505050" stroke-width="1.9" fill="none"/></svg>
<svg class="a" style="left:970px;top:582px" width="8" height="8" viewBox="0 0 8 8"><path d="M2.5 1L5.8 4L2.5 7" stroke="#505050" stroke-width="1.9" fill="none"/></svg>
<div class="t" style="left:29px;top:614px;font-size:25px;line-height:29px;font-weight:bold;letter-spacing:-0.5px;color:#22a245;background:linear-gradient(#5cbf5c 20%,#15973a 85%);-webkit-background-clip:text;background-clip:text;-webkit-text-fill-color:transparent">earths<span style="display:inline-block;width:23px"></span>ft</div>
<svg class="a" style="left:101px;top:616px" width="24" height="24" viewBox="0 0 24 24"><defs><radialGradient id="g" cx="0.4" cy="0.25" r="0.85"><stop offset="0" stop-color="#6cc3f2"/><stop offset="0.55" stop-color="#1b7fcc"/><stop offset="1" stop-color="#0a4f9e"/></radialGradient><linearGradient id="gl" x1="0" y1="0" x2="0.3" y2="1"><stop offset="0" stop-color="#a8d890"/><stop offset="1" stop-color="#3c9e4e"/></linearGradient><clipPath id="cp"><circle cx="12" cy="12" r="10.7"/></clipPath></defs><circle cx="12" cy="12" r="10.7" fill="url(#g)"/><g clip-path="url(#cp)" fill="url(#gl)"><path d="M13.5 4.2C15.5 3.2 18.5 3.5 20.5 5.5L23 9V15L20.5 18.5L17 21L15.2 21.2L14.5 17.5L13.3 15L11.5 14.3L10 12.5L10.5 10L12.5 8.8L12 6.5Z"/><path d="M0.5 7L3 4.2C5 2.6 8 2.2 10.5 3L9.5 5L7.8 6.8L5.5 8.5L3.6 10.5L1 11Z"/><path d="M1 11.5L4 12.5L6 14.2L7 16.5L6.5 19.5L5.2 22L0.5 20Z"/></g></svg>
<div class="a" style="left:889px;top:611px;width:93px;height:34px;background:#e1e1e1;border:1px solid #adadad"></div>
<svg class="a" style="left:893px;top:617px" width="25" height="22" viewBox="0 0 25 22"><path d="M3 13L8.5 19L22.5 3.5" stroke="#5cb85c" stroke-width="4.2" fill="none" stroke-linecap="round" stroke-linejoin="round"/></svg>
<div class="t" style="left:933px;top:622px;font-size:11.5px">Close</div>
<svg class="a" style="left:971px;top:635.5px" width="15" height="15" viewBox="0 0 15 15"><path d="M10.5 5L14.5 1" stroke="#0b3f94" stroke-width="1.5"/><path d="M10.5 9L14.5 5" stroke="#0b3f94" stroke-width="1.5"/><path d="M10.5 13L14.5 9" stroke="#0b3f94" stroke-width="1.5"/><path d="M6.5 13L10.5 9" stroke="#0b3f94" stroke-width="1.5"/><path d="M2.5 13L6.5 9" stroke="#0b3f94" stroke-width="1.5"/></svg>
</body></html>
